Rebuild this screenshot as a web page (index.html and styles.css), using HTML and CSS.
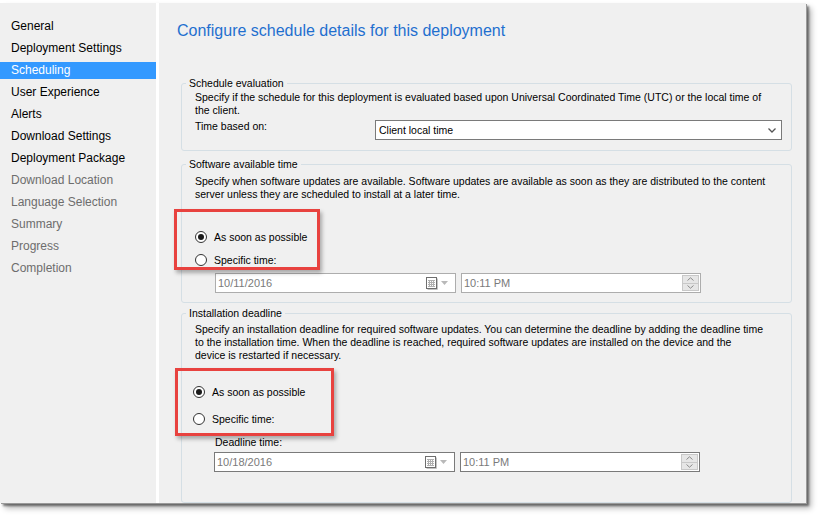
FILE: index.html
```html
<!DOCTYPE html>
<html>
<head>
<meta charset="utf-8">
<title>Scheduling</title>
<link rel="stylesheet" href="styles.css">
</head>
<body>
<div class="window">
  <nav class="nav">
    <div class="nav-item">General</div>
    <div class="nav-item">Deployment Settings</div>
    <div class="nav-item active">Scheduling</div>
    <div class="nav-item">User Experience</div>
    <div class="nav-item">Alerts</div>
    <div class="nav-item">Download Settings</div>
    <div class="nav-item">Deployment Package</div>
    <div class="nav-item disabled">Download Location</div>
    <div class="nav-item disabled">Language Selection</div>
    <div class="nav-item disabled">Summary</div>
    <div class="nav-item disabled">Progress</div>
    <div class="nav-item disabled">Completion</div>
  </nav>
  <main class="main">
    <h1 class="title">Configure schedule details for this deployment</h1>

    <fieldset class="group g1">
      <legend>Schedule evaluation</legend>
      <div class="group-body">
        <p class="desc">Specify if the schedule for this deployment is evaluated based upon Universal Coordinated Time (UTC) or the local time of<br>the client.</p>
        <div class="field-row">
          <span class="field-label">Time based on:</span>
          <div class="select">
            <span>Client local time</span>
            <svg class="chev" width="8" height="5" viewBox="0 0 8 5"><path d="M0.5 0.5L4 4L7.5 0.5" fill="none" stroke="#555" stroke-width="1.3"/></svg>
          </div>
        </div>
      </div>
    </fieldset>

    <fieldset class="group g2">
      <legend>Software available time</legend>
      <div class="group-body">
        <p class="desc">Specify when software updates are available. Software updates are available as soon as they are distributed to the content<br>server unless they are scheduled to install at a later time.</p>
        <div class="radios">
          <div class="radio-row"><span class="radio checked"></span><span class="radio-label">As soon as possible</span></div>
          <div class="radio-row"><span class="radio"></span><span class="radio-label">Specific time:</span></div>
        </div>
        <div class="pickers">
          <div class="picker date">
            <span class="value">10/11/2016</span>
            <svg class="cal" width="13" height="13" viewBox="0 0 13 13"><rect x="0.5" y="0.5" width="10" height="11" fill="#fff" stroke="#6e6e6e"/><path d="M11.5 1.5v11h-10" fill="none" stroke="#c4c4c4"/><path d="M2 3.5h7M2 5.5h7M2 7.5h7M2 9.5h7M3.5 3v7M5.5 3v7M7.5 3v7" stroke="#b0b0b0"/></svg>
            <svg class="drop" width="7" height="4" viewBox="0 0 7 4"><path d="M0 0h7L3.5 4z" fill="#b9b9b9"/></svg>
          </div>
          <div class="picker time">
            <span class="value">10:11 PM</span>
            <div class="spin">
              <span class="spin-btn"><svg width="7" height="4" viewBox="0 0 7 4"><path d="M0.5 3.5L3.5 0.8L6.5 3.5" fill="none" stroke="#8a8a8a"/></svg></span>
              <span class="spin-btn"><svg width="7" height="4" viewBox="0 0 7 4"><path d="M0.5 0.5L3.5 3.2L6.5 0.5" fill="none" stroke="#8a8a8a"/></svg></span>
            </div>
          </div>
        </div>
      </div>
    </fieldset>

    <fieldset class="group g3">
      <legend>Installation deadline</legend>
      <div class="group-body">
        <p class="desc">Specify an installation deadline for required software updates. You can determine the deadline by adding the deadline time<br>to the installation time. When the deadline is reached, required software updates are installed on the device and the<br>device is restarted if necessary.</p>
        <div class="radios">
          <div class="radio-row"><span class="radio checked"></span><span class="radio-label">As soon as possible</span></div>
          <div class="radio-row"><span class="radio"></span><span class="radio-label">Specific time:</span></div>
        </div>
        <div class="deadline-label">Deadline time:</div>
        <div class="pickers">
          <div class="picker date">
            <span class="value">10/18/2016</span>
            <svg class="cal" width="13" height="13" viewBox="0 0 13 13"><rect x="0.5" y="0.5" width="10" height="11" fill="#fff" stroke="#6e6e6e"/><path d="M11.5 1.5v11h-10" fill="none" stroke="#c4c4c4"/><path d="M2 3.5h7M2 5.5h7M2 7.5h7M2 9.5h7M3.5 3v7M5.5 3v7M7.5 3v7" stroke="#b0b0b0"/></svg>
            <svg class="drop" width="7" height="4" viewBox="0 0 7 4"><path d="M0 0h7L3.5 4z" fill="#b9b9b9"/></svg>
          </div>
          <div class="picker time">
            <span class="value">10:11 PM</span>
            <div class="spin">
              <span class="spin-btn"><svg width="7" height="4" viewBox="0 0 7 4"><path d="M0.5 3.5L3.5 0.8L6.5 3.5" fill="none" stroke="#8a8a8a"/></svg></span>
              <span class="spin-btn"><svg width="7" height="4" viewBox="0 0 7 4"><path d="M0.5 0.5L3.5 3.2L6.5 0.5" fill="none" stroke="#8a8a8a"/></svg></span>
            </div>
          </div>
        </div>
      </div>
    </fieldset>
  </main>
  <div class="callout callout-1"></div>
  <div class="callout callout-2"></div>
</div>
</body>
</html>
```

FILE: styles.css
```css
* { box-sizing: border-box; }

html, body {
  margin: 0;
  padding: 0;
  background: #ffffff;
}

body {
  width: 819px;
  height: 518px;
  overflow: hidden;
  font-family: "Liberation Sans", Arial, sans-serif;
  color: #000;
}

.window {
  position: relative;
  margin-top: 3px;
  width: 806px;
  height: 500px;
  display: flex;
  background: #f0f0f0;
  box-shadow: 1px 1px 0 #9a9a9a, 3px 3px 2px rgba(0, 0, 0, 0.45), 5px 5px 6px rgba(0, 0, 0, 0.3);
}

/* ---------- left navigation ---------- */
.nav {
  width: 159px;
  flex: none;
  padding-top: 15px;
  border-right: 3px solid #ffffff;
  background: #f0f0f0;
}

.nav-item {
  height: 17px;
  line-height: 17px;
  margin-bottom: 5px;
  padding-left: 11px;
  font-size: 12px;
  color: #000;
  white-space: nowrap;
}

.nav-item.active {
  background: #3399ff;
  color: #ffffff;
}

.nav-item.disabled {
  color: #6d6d6d;
}

/* ---------- main panel ---------- */
.main {
  flex: 1;
  min-width: 0;
  padding: 18px 14px 0 18px;
  overflow: hidden;
}

.title {
  margin: 0 0 36px 0;
  font-size: 16px;
  line-height: 20px;
  font-weight: normal;
  color: #1f6fcf;
  white-space: nowrap;
}

.group {
  margin: 0 0 0 4px;
  padding: 0;
  min-width: 0;
  border: 1px solid #d5dfe5;
  border-radius: 3px;
  font-size: 10.5px;
  line-height: 13px;
}

.group legend {
  margin-left: 4px;
  padding: 0 3px;
  font-size: 10.5px;
  line-height: 13px;
  white-space: nowrap;
}

.group-body {
  padding: 1px 9px 10px 13px;
}

.g2 { margin-top: 7px; }
.g2 .group-body { padding-top: 4px; padding-bottom: 9px; }

.g3 { margin-top: 4px; }
.g3 .group-body { padding-top: 3px; padding-bottom: 30px; }

.desc {
  margin: 0;
  white-space: nowrap;
}

/* schedule evaluation row */
.field-row {
  display: flex;
  align-items: flex-start;
  margin-top: 3px;
}

.field-label {
  width: 180px;
  flex: none;
}

.select {
  flex: 1;
  height: 20px;
  display: flex;
  align-items: center;
  justify-content: space-between;
  padding: 0 5px 0 3px;
  background: #ffffff;
  border: 1px solid #7a7a7a;
}

/* radios */
.radios {
  display: flex;
  flex-direction: column;
  gap: 7px;
  margin-top: 28px;
}

.g3 .radios {
  margin-top: 22px;
  gap: 11px;
  margin-left: -2px;
}

.radio-row {
  display: flex;
  align-items: center;
  height: 16px;
}

.radio {
  width: 12px;
  height: 12px;
  flex: none;
  border: 1px solid #333333;
  border-radius: 50%;
  background: #ffffff;
  display: flex;
  align-items: center;
  justify-content: center;
}

.radio.checked::after {
  content: "";
  width: 6px;
  height: 6px;
  border-radius: 50%;
  background: #1a1a1a;
}

.radio-label {
  margin-left: 7px;
  white-space: nowrap;
}

/* date / time pickers */
.pickers {
  display: flex;
  gap: 5px;
  margin-top: 5px;
  margin-left: 20px;
}

.g3 .pickers {
  margin-top: 3px;
  margin-left: 19px;
}

.deadline-label {
  margin-top: 9px;
  margin-left: 20px;
}

.picker {
  height: 20px;
  display: flex;
  align-items: center;
  background: #ffffff;
  border: 1px solid #adadad;
  color: #7a7a7a;
  font-size: 11px;
}

.g3 .picker {
  border-color: #7a7a7a;
}

.picker.date {
  width: 241px;
  padding: 0 7px 0 2px;
}

.picker.time {
  width: 240px;
  padding: 0 1px 0 2px;
}

.picker .value {
  flex: 1;
}

.cal {
  margin-right: 2px;
}

.spin {
  display: flex;
  flex-direction: column;
  width: 17px;
  height: 16px;
}

.spin-btn {
  flex: 1;
  display: flex;
  align-items: center;
  justify-content: center;
  background: #e6e6e6;
  border: 1px solid #c8c8c8;
}

.spin-btn + .spin-btn {
  border-top: none;
}

/* annotation callouts drawn over the dialog */
.callout {
  position: absolute;
  border: 3px solid #e8423f;
  box-shadow: 2px 3px 4px rgba(0, 0, 0, 0.3);
}

.callout-1 {
  left: 174px;
  top: 206px;
  width: 146px;
  height: 61px;
}

.callout-2 {
  left: 175px;
  top: 365px;
  width: 159px;
  height: 68px;
}
```
